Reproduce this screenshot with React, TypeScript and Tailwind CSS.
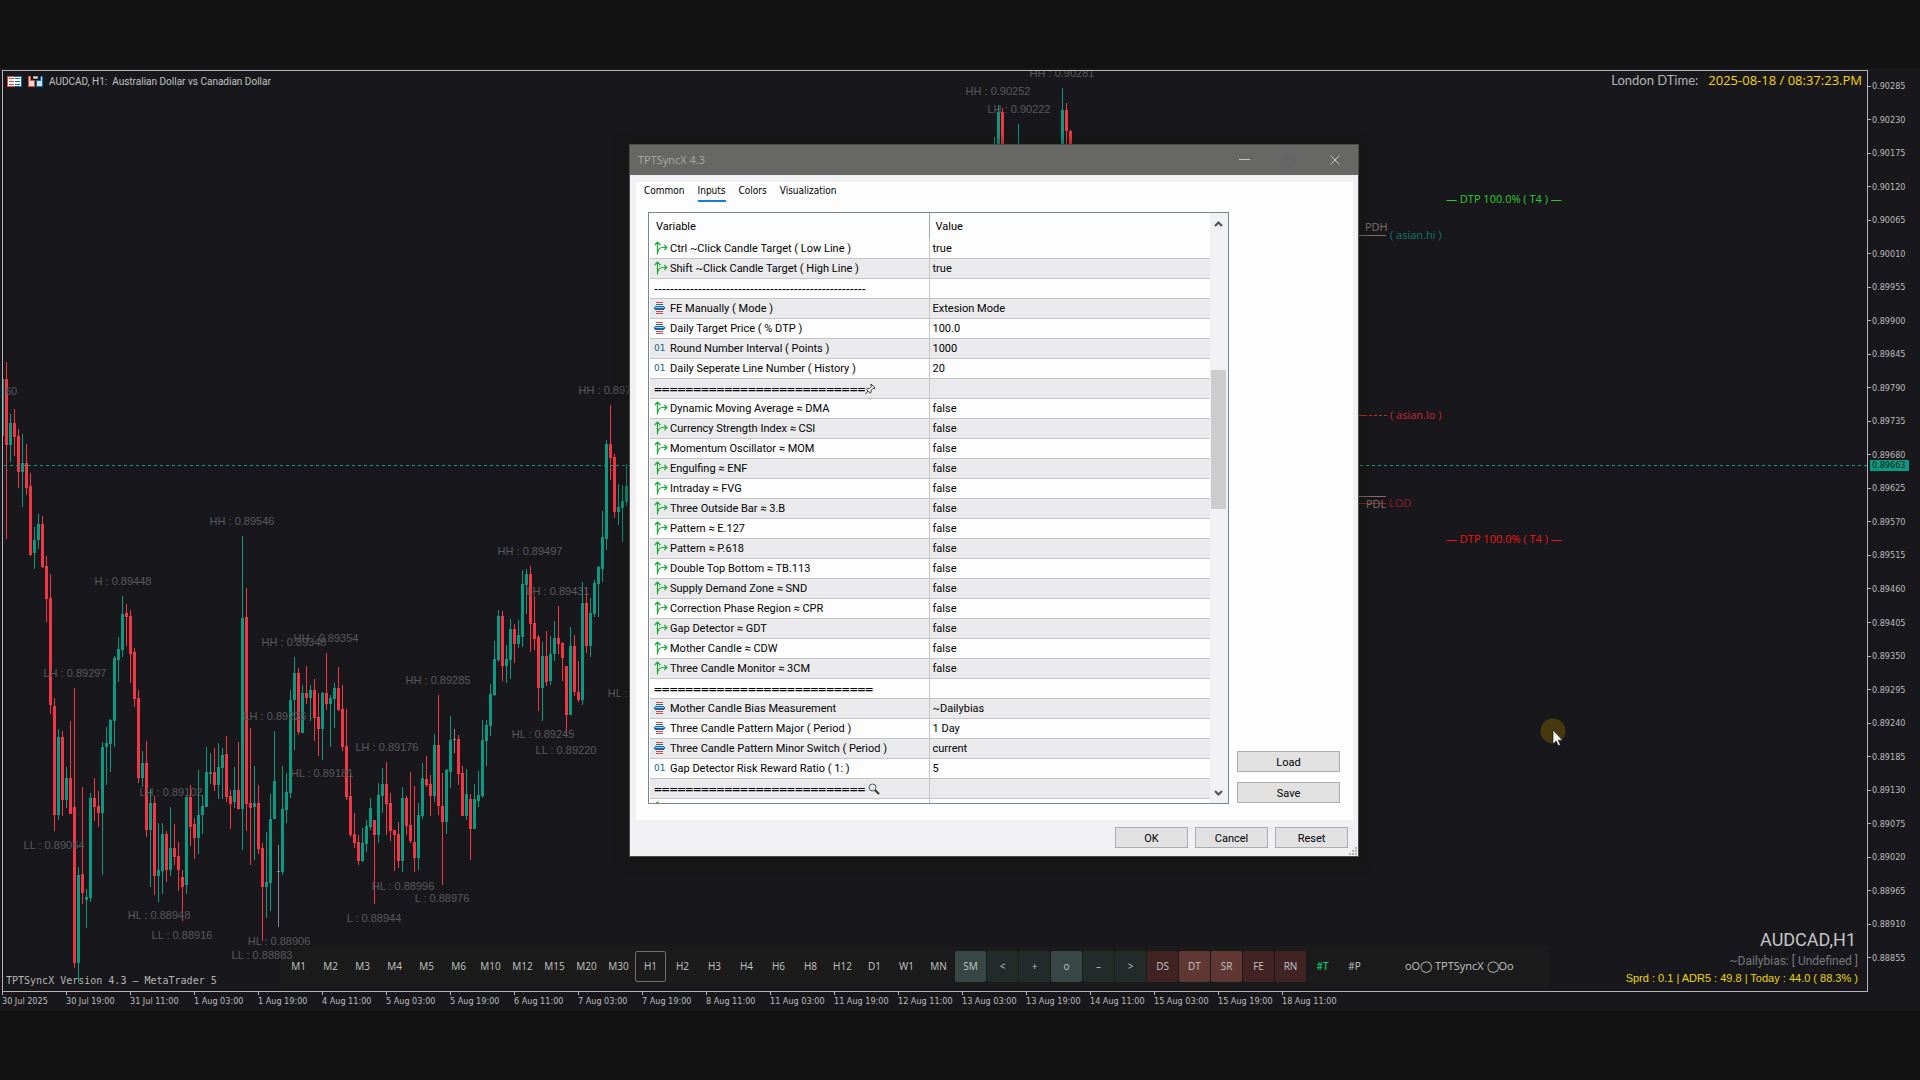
import type { ReactNode } from "react";

type Candle = [kind: "u" | "d" | "n", high: number, top: number, bottom: number, low: number];

const UP = "#0b9981";
const DOWN = "#f23645";
const FLAT = "#84868f";

/* Candles every 4px, y values in chart units */
const CANDLES: Candle[] = [
  ["u", 379, 379, 436, 436], ["d", 362, 379, 445, 539], ["u", 414, 423, 445, 462], ["d", 409, 423, 437, 456],
  ["d", 429, 436, 472, 488], ["u", 434, 463, 472, 507], ["d", 444, 463, 488, 495], ["d", 473, 486, 555, 556],
  ["u", 527, 540, 553, 569], ["u", 514, 524, 540, 549], ["d", 516, 524, 567, 568], ["d", 556, 566, 599, 622],
  ["d", 574, 598, 705, 714], ["d", 698, 706, 815, 831], ["u", 729, 737, 815, 820], ["d", 731, 737, 800, 816],
  ["u", 767, 778, 800, 808], ["d", 721, 778, 814, 814], ["d", 688, 807, 963, 968], ["u", 867, 875, 963, 983],
  ["d", 787, 874, 893, 904], ["u", 889, 897, 900, 928], ["u", 793, 798, 898, 902], ["d", 778, 798, 807, 821],
  ["d", 791, 806, 813, 827], ["u", 742, 747, 813, 875], ["u", 727, 743, 747, 785], ["u", 719, 720, 744, 772],
  ["u", 656, 658, 721, 747], ["u", 637, 649, 660, 682], ["u", 596, 614, 650, 657], ["d", 604, 613, 617, 646],
  ["d", 610, 616, 654, 683], ["d", 648, 652, 699, 707], ["d", 690, 698, 778, 783], ["u", 751, 763, 778, 787],
  ["d", 741, 763, 830, 837], ["u", 789, 803, 830, 887], ["d", 796, 803, 876, 895], ["u", 823, 870, 876, 902],
  ["u", 823, 834, 871, 894], ["d", 831, 834, 870, 882], ["u", 807, 848, 870, 876], ["d", 824, 848, 857, 865],
  ["d", 842, 856, 870, 891], ["d", 870, 877, 887, 921], ["u", 796, 797, 885, 894], ["d", 785, 797, 827, 846],
  ["d", 818, 824, 838, 859], ["u", 770, 815, 838, 854], ["u", 795, 806, 815, 834], ["u", 747, 772, 807, 807],
  ["u", 753, 772, 774, 784], ["d", 748, 772, 785, 791], ["u", 743, 767, 785, 799], ["u", 748, 755, 768, 799],
  ["d", 736, 754, 797, 802], ["d", 790, 796, 804, 829], ["u", 767, 790, 802, 808], ["d", 742, 790, 809, 810],
  ["u", 536, 618, 809, 850], ["d", 588, 617, 804, 831], ["d", 728, 803, 808, 865], ["u", 766, 803, 807, 860],
  ["d", 785, 803, 849, 854], ["d", 843, 848, 887, 941], ["u", 832, 882, 887, 918], ["u", 794, 819, 883, 911],
  ["u", 731, 781, 819, 819], ["n", 845, 871, 872, 927], ["u", 766, 809, 872, 875], ["u", 773, 792, 810, 823],
  ["u", 690, 700, 793, 798], ["u", 657, 673, 700, 750], ["d", 668, 673, 732, 735], ["u", 685, 693, 733, 733],
  ["d", 666, 693, 698, 704], ["u", 685, 690, 698, 721], ["d", 679, 690, 718, 741], ["d", 693, 717, 729, 756],
  ["u", 692, 693, 729, 760], ["d", 653, 693, 704, 710], ["u", 695, 698, 704, 747], ["u", 683, 688, 699, 728],
  ["d", 667, 688, 710, 711], ["d", 685, 709, 747, 751], ["d", 709, 746, 797, 800], ["d", 773, 796, 835, 837],
  ["d", 813, 834, 843, 848], ["d", 835, 842, 861, 865], ["u", 828, 843, 861, 862], ["u", 820, 826, 844, 852],
  ["u", 798, 808, 827, 830], ["d", 820, 820, 835, 904], ["u", 783, 795, 835, 843], ["u", 768, 784, 796, 813],
  ["d", 762, 784, 804, 835], ["d", 793, 803, 831, 841], ["d", 830, 830, 835, 871], ["d", 822, 834, 861, 868],
  ["u", 787, 798, 861, 872], ["d", 796, 798, 826, 835], ["d", 772, 825, 841, 843], ["d", 786, 842, 858, 872],
  ["u", 803, 815, 858, 870], ["u", 763, 778, 816, 819], ["d", 756, 779, 785, 787], ["d", 775, 784, 796, 816],
  ["u", 734, 745, 796, 802], ["d", 695, 745, 806, 815], ["d", 773, 806, 822, 885], ["u", 769, 770, 822, 834],
  ["u", 716, 740, 772, 788], ["n", 729, 739, 740, 753], ["d", 735, 739, 774, 785], ["d", 766, 773, 816, 816],
  ["u", 769, 794, 816, 820], ["d", 794, 799, 829, 860], ["u", 784, 799, 829, 829], ["u", 771, 795, 801, 807],
  ["u", 720, 740, 796, 798], ["u", 720, 725, 741, 766], ["u", 684, 694, 726, 736], ["u", 641, 659, 695, 696],
  ["u", 610, 616, 660, 662], ["d", 611, 616, 666, 681], ["u", 645, 659, 666, 683], ["u", 619, 629, 660, 679],
  ["d", 624, 629, 644, 663], ["u", 620, 635, 644, 648], ["u", 570, 584, 637, 647], ["u", 569, 574, 585, 614],
  ["d", 566, 574, 624, 652], ["d", 596, 623, 639, 650], ["d", 635, 637, 688, 711], ["u", 642, 656, 688, 721],
  ["d", 631, 656, 682, 686], ["u", 636, 654, 681, 685], ["u", 621, 638, 654, 661], ["d", 606, 638, 644, 654],
  ["d", 642, 643, 658, 681], ["d", 666, 666, 715, 736], ["u", 627, 646, 715, 715], ["d", 635, 646, 692, 696],
  ["d", 661, 692, 700, 702], ["u", 582, 603, 700, 705], ["d", 587, 603, 646, 653], ["u", 598, 613, 646, 657],
  ["u", 580, 583, 614, 617], ["u", 566, 567, 584, 617], ["u", 511, 537, 569, 582], ["u", 440, 444, 539, 550],
  ["d", 405, 444, 458, 480], ["d", 454, 457, 512, 518], ["u", 484, 507, 512, 525], ["u", 485, 501, 508, 542],
  ["u", 464, 486, 502, 506], ["d", 484, 486, 508, 510],
];

/* Later candles that rise above the open window: [index, candle] */
const LATE: [number, Candle][] = [
  [247, ["u", 137, 160, 180, 190]], [248, ["u", 105, 112, 170, 180]], [249, ["d", 108, 112, 170, 180]],
  [253, ["u", 124, 160, 180, 190]], [264, ["u", 88, 110, 170, 180]], [265, ["d", 103, 110, 131, 160]],
  [266, ["d", 130, 131, 170, 180]],
];

const SWINGS: [string, number, number][] = [
  ["HH : 0.89546", 242, 521], ["H : 0.89448", 123, 581], ["LH : 0.89297", 75, 673], ["HH : 0.89348", 294, 642],
  ["HH : 0.89354", 326, 638], ["60", 11, 391], ["LH : 0.89226", 275, 716], ["LH : 0.89102", 171, 792],
  ["LL : 0.89064", 54, 845], ["HL : 0.88948", 159, 915], ["LL : 0.88916", 182, 935], ["HL : 0.88906", 279, 941],
  ["LL : 0.88883", 262, 955], ["HL : 0.89181", 322, 773], ["LH : 0.89176", 387, 747], ["HH : 0.89285", 438, 680],
  ["HH : 0.89497", 530, 551], ["LH : 0.89431", 558, 591], ["HL : 0.89245", 543, 734], ["LL : 0.89220", 566, 750],
  ["HL : 0.89282", 639, 693], ["HL : 0.88996", 403, 886], ["L : 0.88976", 442, 898], ["L : 0.88944", 374, 918],
  ["HH : 0.89762", 611, 390], ["HH : 0.90252", 998, 91], ["LH : 0.90222", 1019, 109], ["HH : 0.90281", 1062, 73],
];

const PRICES = Array.from({ length: 27 }, (_, i) => ((90285 - i * 55) / 100000).toFixed(5));

const TIMES = [
  "30 Jul 2025", "30 Jul 19:00", "31 Jul 11:00", "1 Aug 03:00", "1 Aug 19:00", "4 Aug 11:00", "5 Aug 03:00",
  "5 Aug 19:00", "6 Aug 11:00", "7 Aug 03:00", "7 Aug 19:00", "8 Aug 11:00", "11 Aug 03:00", "11 Aug 19:00",
  "12 Aug 11:00", "13 Aug 03:00", "13 Aug 19:00", "14 Aug 11:00", "15 Aug 03:00", "15 Aug 19:00", "18 Aug 11:00",
];

const SMALL = "font-['DejaVu_Sans_Condensed','DejaVu_Sans',sans-serif] text-[9px] leading-[12px]";
const UI = "font-['Roboto',sans-serif]";
const OPEN = "font-['Open_Sans',sans-serif]";

function CandleShape({ i, c }: { i: number; c: Candle }) {
  const [kind, high, top, bottom, low] = c;
  const fill = kind === "u" ? UP : kind === "d" ? DOWN : FLAT;
  const x = 6 + 4 * i;
  return (
    <g fill={fill}>
      <rect x={x} y={high} width={1} height={low - high} />
      <rect x={x - 1} y={top} width={3} height={Math.max(1, bottom - top)} />
    </g>
  );
}

function ChartDrawing() {
  return (
    <svg className="absolute inset-0 h-full w-full" shapeRendering="crispEdges" aria-hidden="true">
      <g transform="translate(-3 -71)">
        {CANDLES.map((c, n) => <CandleShape key={n} i={n - 1} c={c} />)}
        {LATE.map(([i, c]) => <CandleShape key={i} i={i} c={c} />)}
        <line x1={4} x2={1867} y1={465.5} y2={465.5} stroke={UP} strokeDasharray="3 3" />
        <path d="M1359 235.5h27M1359 496.5h27" stroke="#8b6b61" />
        <path d="M1359 415.5h8m2 0h3m2 0h3m2 0h3m2 0h3" stroke="#c8272c" />
        <path d="M1359 503.5h27" stroke="#8f2029" />
      </g>
    </svg>
  );
}

function Note({ x, y, className, children }: { x: number; y: number; className: string; children: ReactNode }) {
  return (
    <span
      className={`absolute -translate-y-1/2 whitespace-pre text-[11px] leading-[14px] ${OPEN} ${className}`}
      style={{ left: x - 3, top: y - 71 }}
    >
      {children}
    </span>
  );
}

function BookIcon() {
  return (
    <svg width="15" height="11" viewBox="0 0 15 11" shapeRendering="crispEdges" aria-hidden="true">
      <rect width="8" height="11" fill="#e8453c" />
      <rect x="8" width="7" height="11" fill="#1565b0" />
      <rect x="1" y="1" width="13" height="9" fill="#fff" />
      <path d="M2 2.500h5M2 5.500h5M2 8.500h5" stroke="#e8453c" />
      <path d="M8 2.500h5M8 5.500h5M8 8.500h5" stroke="#1565b0" />
    </svg>
  );
}

function TradeIcon() {
  return (
    <svg width="15" height="11" viewBox="0 0 15 11" shapeRendering="crispEdges" aria-hidden="true">
      <path d="M0 0h3v4h4v7H0z" fill="#e8453c" />
      <path d="M1 1h1v4h4v5H1z" fill="#f7dcda" />
      <path d="M12 0h3v11H8V4h4z" fill="#1565b0" />
      <path d="M13 1h1v9H9V5h4z" fill="#bfe6f5" />
      <rect x="5" y="0" width="5" height="3" fill="#8c9488" />
      <rect x="6" y="1" width="3" height="1" fill="#fff" />
    </svg>
  );
}

function BoolIcon() {
  return (
    <svg width="14" height="14" viewBox="0 0 14 14" fill="none" stroke="#14ae33" strokeWidth="1.200" aria-hidden="true">
      <path d="M3.500 13.500V1.500M0.700 4L3.500 1.200L6.300 4M3.500 12C4 9 5.500 6.500 8.500 6.500H12.800M10.300 4L12.900 6.500L10.300 9" />
    </svg>
  );
}

function EnumIcon() {
  return (
    <svg width="11" height="12" viewBox="0 0 11 12" shapeRendering="crispEdges" aria-hidden="true">
      <path d="M2 0h7v1H2zM2 9h7v1H2zM2 11h7v1H2z" fill="#dc4444" />
      <path d="M2 2h7v1H2zM1 4h9v1h1v2h-1v1H1V7H0V5h1z" fill="#1767ab" />
      <path d="M1 5h9v1H1z" fill="#9cd0f2" />
    </svg>
  );
}

function PinIcon() {
  return (
    <svg width="11" height="12" viewBox="0 0 11 12" fill="#fff" stroke="#333" aria-hidden="true">
      <path d="M6 1l4 4-1 .5-1-.2-2 2 .2 2-1 .7L1.500 6.500l.8-1 2 .2 2-2L6 2zM3.200 8L.5 11" />
    </svg>
  );
}

function GlassIcon() {
  return (
    <svg className="ml-[3px]" width="12" height="12" viewBox="0 0 12 12" fill="none" aria-hidden="true">
      <circle cx="4.500" cy="4.500" r="3.500" fill="#dfeaf0" stroke="#555" />
      <path d="M7 7l4 4" stroke="#333" strokeWidth="2" />
    </svg>
  );
}

type Kind = "bool" | "enum" | "int" | "rule";
const ROWS: [Kind, string, string, ReactNode?][] = [
  ["bool", "Ctrl ~Click Candle Target ( Low Line )", "true"],
  ["bool", "Shift ~Click Candle Target ( High Line )", "true"],
  ["rule", "-----------------------------------------------------", ""],
  ["enum", "FE Manually ( Mode )", "Extesion Mode"],
  ["enum", "Daily Target Price ( % DTP )", "100.0"],
  ["int", "Round Number Interval ( Points )", "1000"],
  ["int", "Daily Seperate Line Number ( History )", "20"],
  ["rule", "===========================", "", <PinIcon key="p" />],
  ["bool", "Dynamic Moving Average ≈ DMA", "false"],
  ["bool", "Currency Strength Index ≈ CSI", "false"],
  ["bool", "Momentum Oscillator ≈ MOM", "false"],
  ["bool", "Engulfing ≈ ENF", "false"],
  ["bool", "Intraday ≈ FVG", "false"],
  ["bool", "Three Outside Bar ≈ 3.B", "false"],
  ["bool", "Pattern ≈ E.127", "false"],
  ["bool", "Pattern ≈ P.618", "false"],
  ["bool", "Double Top Bottom ≈ TB.113", "false"],
  ["bool", "Supply Demand Zone ≈ SND", "false"],
  ["bool", "Correction Phase Region ≈ CPR", "false"],
  ["bool", "Gap Detector ≈ GDT", "false"],
  ["bool", "Mother Candle ≈ CDW", "false"],
  ["bool", "Three Candle Monitor ≈ 3CM", "false"],
  ["rule", "============================", ""],
  ["enum", "Mother Candle Bias Measurement", "~Dailybias"],
  ["enum", "Three Candle Pattern Major ( Period )", "1 Day"],
  ["enum", "Three Candle Pattern Minor Switch ( Period )", "current"],
  ["int", "Gap Detector Risk Reward Ratio ( 1: )", "5"],
  ["rule", "===========================", "", <GlassIcon key="g" />],
  ["bool", "", ""],
];

function KindIcon({ kind }: { kind: Kind }) {
  if (kind === "bool") return <BoolIcon />;
  if (kind === "enum") return <EnumIcon />;
  return <span className="font-['DejaVu_Sans',sans-serif] text-[9px] text-[#17649b]">01</span>;
}

function InputsTable() {
  return (
    <div className="flex h-[592px] w-[581px] overflow-hidden border border-[#7a8694] bg-[#fdfdfd] pl-px">
      <div className="min-w-0 flex-1 overflow-hidden">
        <table className={`w-full table-fixed border-collapse text-[11px] leading-[14px] text-black ${UI}`}>
          <colgroup>
            <col className="w-[279px]" />
            <col />
          </colgroup>
          <thead>
            <tr className="h-[25px]">
              <th className="border-r border-[#a0a4ac] pb-0 pl-[6px] pt-[3px] text-left font-normal">Variable</th>
              <th className="pb-0 pl-[6px] pt-[3px] text-left font-normal">Value</th>
            </tr>
          </thead>
          <tbody>
            {ROWS.map(([kind, name, value, mark], n) => (
              <tr key={n} className="h-[20px] border-b border-[#c6c6c8] odd:bg-[#fdfdfd] even:bg-[#eaeaec]">
                <td className="overflow-hidden whitespace-pre border-r border-[#c6c6c8] p-0">
                  {kind === "rule" ? (
                    <div className="flex h-[19px] items-center pl-[4px] pt-[2px]">
                      <span className={name[0] === "=" ? "font-['DejaVu_Sans_Mono',monospace] text-[13px]" : "font-['Liberation_Sans',sans-serif] text-[12px]"}>
                        {name}
                      </span>
                      {mark}
                    </div>
                  ) : (
                    <div className="flex h-[19px] items-center pl-[3px]">
                      <span className="flex w-[17px] shrink-0 items-center pl-px">
                        <KindIcon kind={kind} />
                      </span>
                      <span className="pt-[2px]">{name}</span>
                    </div>
                  )}
                </td>
                <td className="p-0 pl-[3px] pt-[2px]">{value}</td>
              </tr>
            ))}
          </tbody>
        </table>
      </div>
      <div className="flex w-[18px] shrink-0 flex-col items-center bg-[#f1f1f3] pr-px">
        <button type="button" aria-label="Scroll up" className="flex h-[21px] items-center">
          <svg width="9" height="6" viewBox="0 0 9 6" fill="none" stroke="#505050" strokeWidth="2"><path d="M1 5l3.500-3.500L8 5" /></svg>
        </button>
        <div className="mt-[136px] h-[139px] w-[15px] bg-[#cdcdcd]" />
        <button type="button" aria-label="Scroll down" className="mt-auto flex h-[21px] items-center">
          <svg width="9" height="6" viewBox="0 0 9 6" fill="none" stroke="#505050" strokeWidth="2"><path d="M1 1l3.500 3.500L8 1" /></svg>
        </button>
      </div>
    </div>
  );
}

function DialogButton({ wide, children }: { wide?: boolean; children: ReactNode }) {
  return (
    <button
      type="button"
      className={`h-[21px] border border-[#adadad] bg-[#e1e1e2] pt-px text-[11px] leading-none text-black ${UI} ${wide ? "w-[103px]" : "w-[73px]"}`}
    >
      {children}
    </button>
  );
}

function SettingsDialog() {
  return (
    <div
      role="dialog"
      aria-label="TPTSyncX 4.3"
      className="absolute left-[629px] top-[144px] flex w-[730px] flex-col border border-[#4a4a4a] bg-[#f1f1f4] shadow-[0_2px_10px_5px_rgba(20,20,8,0.35)]"
    >
      <div className="flex h-[30px] items-center bg-[#676765] pl-[8px]">
        <h1 className={`flex-1 text-[11px] text-[#a5aba7] ${OPEN}`}>TPTSyncX 4.3</h1>
        <button type="button" aria-label="Minimize" className="flex w-[45px] justify-center">
          <svg width="11" height="11" stroke="#c4c8c4" aria-hidden="true"><path d="M0 4.500h11" /></svg>
        </button>
        <button type="button" aria-label="Maximize" className="flex w-[45px] justify-center">
          <svg width="11" height="11" fill="none" stroke="#62626e" aria-hidden="true"><path d="M0.500 2.500h8v8h-8zM2.500 2V.5h8v8H9" /></svg>
        </button>
        <button type="button" aria-label="Close" className="flex w-[46px] justify-center">
          <svg width="11" height="11" stroke="#c4c8c4" aria-hidden="true"><path d="M0.500 0.500l9 9M9.500 0.500l-9 9" /></svg>
        </button>
      </div>
      <div className="ml-[6px] mr-[5px] mt-[7px] flex flex-col bg-[#fdfdfd] pb-[16px]">
        <div
          role="tablist"
          className="flex gap-[13px] pl-[8px] font-['DejaVu_Sans_Condensed','DejaVu_Sans',sans-serif] text-[10px] leading-[16px] text-black"
        >
          {["Common", "Inputs", "Colors", "Visualization"].map((t) => (
            <button
              key={t}
              type="button"
              role="tab"
              aria-selected={t === "Inputs"}
              className="h-[20px] border-b-2 border-transparent aria-selected:border-[#1a7bd3]"
            >
              {t}
            </button>
          ))}
        </div>
        <div className="mt-[10px] flex gap-[8px] pl-[12px]">
          <InputsTable />
          <div className="flex flex-col justify-end gap-[10px] pb-px">
            <DialogButton wide>Load</DialogButton>
            <DialogButton wide>Save</DialogButton>
          </div>
        </div>
      </div>
      <div className="flex justify-end gap-[7px] pb-[8px] pr-[10px] pt-[7px]">
        <DialogButton>OK</DialogButton>
        <DialogButton>Cancel</DialogButton>
        <DialogButton>Reset</DialogButton>
      </div>
      <svg className="absolute bottom-px right-px" width="8" height="8" fill="#b4b4b6" aria-hidden="true">
        <path d="M6 0h2v2H6zM3 3h2v2H3zM6 3h2v2H6zM0 6h2v2H0zM3 6h2v2H3zM6 6h2v2H6z" />
      </svg>
    </div>
  );
}

const FRAMES = [
  "M1", "M2", "M3", "M4", "M5", "M6", "M10", "M12", "M15", "M20", "M30", "H1", "H2", "H3", "H4", "H6", "H8", "H12",
  "D1", "W1", "MN",
];
const TOOLS: [string, string][] = [
  ["SM", "bg-[#384745]"], ["<", "bg-[#222b29] border-[#1d3322]"], ["+", "bg-[#222b29] border-[#1d3322]"],
  ["o", "bg-[#384745]"], ["–", "bg-[#222b29] border-[#1d3322]"], [">", "bg-[#222b29] border-[#1d3322]"],
  ["DS", "bg-[#422324]"], ["DT", "bg-[#603833]"], ["SR", "bg-[#603833]"], ["FE", "bg-[#422324]"],
  ["RN", "bg-[#422324]"], ["#T", "text-[#08e58a]"], ["#P", ""],
];

function Toolbar() {
  const cell = "h-[31px] w-[31px] rounded-[2px] border text-center";
  return (
    <div
      className={`absolute bottom-[4px] left-[277px] flex h-[41px] w-[1270px] items-center gap-px rounded-[2px] bg-[#1b1b1b] pl-[3px] text-[10px] text-[#c3c5c1] ${OPEN}`}
    >
      {FRAMES.map((f) => (
        <button key={f} type="button" className={`${cell} ${f === "H1" ? "border-[#6e6e6e]" : "border-transparent"}`}>
          {f}
        </button>
      ))}
      {TOOLS.map(([t, c]) => (
        <button key={t} type="button" className={`${cell} ${c.includes("border") ? "" : "border-transparent"} ${c}`}>
          {t}
        </button>
      ))}
      <span className="ml-[34px] text-[11px]">oO◯ TPTSyncX ◯Oo</span>
    </div>
  );
}

export default function App() {
  return (
    <div className="flex min-h-screen flex-col overflow-hidden bg-[#121212] pb-[69px] pt-[68px]">
      <main className="flex flex-1 flex-col bg-[#18181c] pt-[2px]">
        <div className="flex flex-1 pl-[2px]">
          <section className="relative flex-1 overflow-hidden border border-[#b4b4b6]">
            <ChartDrawing />
            <Toolbar />
            {SWINGS.map(([t, x, y]) => (
              <span
                key={t}
                className="absolute -translate-x-1/2 -translate-y-1/2 whitespace-pre font-['Liberation_Sans',sans-serif] text-[11px] leading-[12px] text-[#59595b]"
                style={{ left: x - 3, top: y - 71 }}
              >
                {t}
              </span>
            ))}
            <Note x={1446} y={199} className="text-[#28cc30]">— DTP 100.0% ( T4 ) —</Note>
            <Note x={1446} y={539} className="text-[#f01212]">— DTP 100.0% ( T4 ) —</Note>
            <Note x={1365} y={227} className="text-[#80706a]">PDH</Note>
            <Note x={1390} y={235} className="text-[#11786c]">( asian.hi )</Note>
            <Note x={1390} y={415} className="text-[#c8272c]">( asian.lo )</Note>
            <Note x={1366} y={504} className="text-[#80706a]">PDL</Note>
            <Note x={1389} y={503} className="text-[#8f2029]">LOD</Note>

            <header className="absolute inset-x-0 top-0 flex items-center pl-[4px] pr-[5px]">
              <div className={`flex items-center gap-[6px] pt-[2px] text-[10px] leading-[12px] text-[#c0c0c0] ${UI}`}>
                <BookIcon />
                <TradeIcon />
                <span className="whitespace-pre pt-px">AUDCAD, H1:  Australian Dollar vs Canadian Dollar</span>
              </div>
              <p className="ml-auto flex items-center gap-[10px] text-[13px] leading-[18px]">
                <span className="font-['Lato',sans-serif] text-[#b4b4b4]">London DTime:</span>
                <span className={`text-[#f8d406] ${OPEN}`}>2025-08-18 / 08:37:23.PM</span>
              </p>
            </header>

            <p className="absolute bottom-[3px] left-[3px] font-['DejaVu_Sans_Mono',monospace] text-[10px] leading-[14px] text-[#b4b4b4]">
              TPTSyncX Version 4.3 — MetaTrader 5
            </p>
            <div className="absolute bottom-[5px] right-[9px] text-right">
              <p className="pr-[2px] font-['Roboto',sans-serif] text-[18px] leading-[24px] text-[#c4c4c4]">AUDCAD,H1</p>
              <p className="font-['Roboto',sans-serif] text-[12px] leading-[18px] text-[#77777b]">~Dailybias: [ Undefined ]</p>
              <p className="font-['Liberation_Sans',sans-serif] text-[11px] leading-[16px] text-[#ecd40a]">
                Sprd : 0.1 | ADR5 : 49.8 | Today : 44.0 ( 88.3% )
              </p>
            </div>
          </section>
          <aside className={`relative flex w-[52px] flex-col justify-between pb-[28px] pt-[10px] text-[#bcbcbc] ${SMALL}`}>
            {PRICES.map((p) => (
              <div key={p} className="flex items-center gap-px">
                <i className="h-px w-[3px] bg-[#b4b4b6]" />
                {p}
              </div>
            ))}
            <span className="absolute left-[2px] top-[390px] h-[11px] w-[39px] bg-[#0b9981] pl-[2px] leading-[11px] text-[#0c1a18]">
              0.89663
            </span>
          </aside>
        </div>
        <div className={`flex h-[19px] pl-[2px] text-[#bcbcbc] ${SMALL}`}>
          {TIMES.map((t) => (
            <div key={t} className="w-[64px] shrink-0 whitespace-nowrap">
              <i className="block h-[3px] w-px bg-[#b4b4b6]" />
              {t}
            </div>
          ))}
        </div>
      </main>
      <SettingsDialog />
      <svg className="absolute left-[1539px] top-[717px]" width="28" height="32" viewBox="0 0 28 32" aria-hidden="true">
        <circle cx="14" cy="14" r="12.500" fill="#46390e" />
        <path d="M14 13v14l3.200-3 2.200 4.800 2-1-2.200-4.600h4.300z" fill="#fff" stroke="#111" strokeWidth="0.700" />
      </svg>
    </div>
  );
}
